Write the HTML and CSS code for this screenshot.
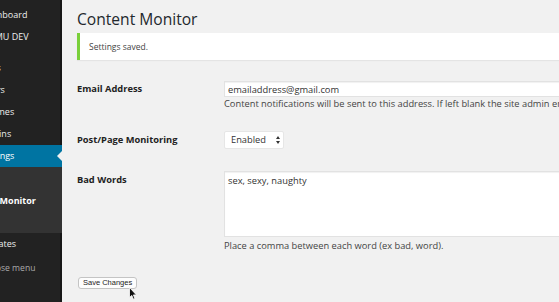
FILE: index.html
```html
<!DOCTYPE html>
<html lang="en">
<head>
<meta charset="utf-8">
<title>Content Monitor</title>
<link rel="stylesheet" href="styles.css">
</head>
<body>
<div class="wrap">
  <nav class="sidebar">
    <ul class="menu">
      <li class="item">Dashboard</li>
      <li class="item">WPMU DEV</li>
      <li class="sep"></li>
      <li class="item">Sites</li>
      <li class="item">Users</li>
      <li class="item">Themes</li>
      <li class="item">Plugins</li>
      <li class="item active">Settings</li>
      <li class="submenu"><span class="sub-item">Content Monitor</span></li>
      <li class="item">Updates</li>
      <li class="item collapse">Collapse menu</li>
    </ul>
  </nav>
  <main class="content">
    <h1 class="title">Content Monitor</h1>
    <div class="notice"><p>Settings saved.</p></div>
    <form class="form">
      <div class="row row-email">
        <label class="label" for="email">Email Address</label>
        <div class="field">
          <input class="text-input" id="email" type="text" value="emailaddress@gmail.com">
          <p class="desc">Content notifications will be sent to this address. If left blank the site admin email will be used.</p>
        </div>
      </div>
      <div class="row row-select">
        <label class="label" for="monitor">Post/Page Monitoring</label>
        <div class="field">
          <div class="select-wrap">
            <select class="select" id="monitor"><option>Enabled</option><option>Disabled</option></select>
            <span class="select-arrows"><svg width="4" height="8" viewBox="0 0 4 8"><path d="M2 0 L4 3 L0 3 Z M2 8 L4 5 L0 5 Z" fill="#333"/></svg></span>
          </div>
        </div>
      </div>
      <div class="row row-words">
        <label class="label" for="words">Bad Words</label>
        <div class="field">
          <textarea class="textarea" id="words">sex, sexy, naughty</textarea>
          <p class="desc">Place a comma between each word (ex bad, word).</p>
        </div>
      </div>
      <div class="actions">
        <button class="button" type="button">Save Changes</button>
        <svg class="cursor" width="8" height="13" viewBox="0 0 8 13"><path d="M0.5 0.5 L0.5 10.5 L2.8 8.4 L4.4 12.2 L5.9 11.5 L4.4 7.9 L7.4 7.9 Z" fill="#111" stroke="#fff" stroke-width="0.8"/></svg>
      </div>
    </form>
  </main>
</div>
</body>
</html>
```
FILE: styles.css
```css
* { box-sizing: border-box; }
html, body { margin: 0; padding: 0; }
body {
  width: 559px;
  height: 302px;
  overflow: hidden;
  background: #f1f1f1;
  font-family: "Open Sans", "Liberation Sans", sans-serif;
  color: #444;
}
.wrap { display: flex; height: 302px; }

/* sidebar */
.sidebar {
  width: 62px;
  flex: none;
  overflow: hidden;
  background: #222;
  box-shadow: inset -2px 0 0 #171717;
  padding-top: 4px;
}
.menu {
  list-style: none;
  margin: 0 0 0 -40px;
  padding: 0;
  width: 102px;
  font-size: 9px;
  color: #eee;
}
.item {
  position: relative;
  height: 22px;
  line-height: 22px;
  padding-left: 21px;
  white-space: nowrap;
}
.sep { height: 9px; }
.item.active { background: #0074a2; color: #fff; }
.item.active::after {
  content: "";
  position: absolute;
  right: 0;
  top: 50%;
  margin-top: -5px;
  border-style: solid;
  border-width: 5px 5px 5px 0;
  border-color: transparent #f1f1f1 transparent transparent;
}
.submenu {
  background: #333;
  padding: 23px 0 21px;
}
.sub-item {
  display: block;
  height: 22px;
  line-height: 22px;
  padding-left: 1px;
  font-weight: 700;
  color: #fff;
  white-space: nowrap;
}
.collapse {
  margin-top: 2px;
  font-size: 8.6px;
  color: #aaa;
  padding-left: 16px;
}

/* content */
.content {
  flex: none;
  width: 560px;
  padding-left: 15px;
}
.title {
  margin: 0;
  padding-top: 9px;
  font-size: 15.6px;
  line-height: 20px;
  font-weight: 400;
  color: #23282d;
}
.notice {
  margin-top: 4px;
  height: 27px;
  background: #fff;
  border-left: 3px solid #7ad03a;
  box-shadow: 0 1px 1px rgba(0,0,0,0.05);
}
.notice p {
  margin: 0;
  padding-left: 9px;
  font-size: 8.5px;
  line-height: 27px;
  color: #444;
}
.form { font-size: 9.3px; }
.row { display: grid; grid-template-columns: 147px 1fr; }
.row-email { margin-top: 21px; }
.row-select { margin-top: 21px; }
.row-words { margin-top: 22px; }
.label {
  font-weight: 700;
  color: #222;
}
.row-email .label { line-height: 15px; }
.row-select .label { line-height: 18px; }
.row-words .label { line-height: 18px; }
.text-input {
  display: block;
  width: 420px;
  height: 16px;
  margin: 0;
  padding: 0 3px;
  border: 1px solid #e2e2e2;
  box-shadow: inset 0 1px 1px rgba(0,0,0,0.06);
  background: #fff;
  font: inherit;
  color: #333;
  line-height: 14px;
}
.desc {
  margin: 1px 0 0;
  line-height: 12px;
  color: #444;
  white-space: nowrap;
}
.select-wrap { position: relative; width: 60px; }
.select {
  -webkit-appearance: none;
  appearance: none;
  display: block;
  width: 60px;
  height: 18px;
  margin: 0;
  padding: 0 0 0 6px;
  border: 1px solid #e6e6e6;
  border-radius: 2px;
  background: #fff;
  font: inherit;
  color: #333;
  line-height: 16px;
}
.select-arrows {
  position: absolute;
  right: 4px;
  top: 5px;
  line-height: 0;
}
.textarea {
  display: block;
  width: 420px;
  height: 66px;
  margin: 0;
  padding: 3px 3px;
  border: 1px solid #e2e2e2;
  box-shadow: inset 0 1px 1px rgba(0,0,0,0.06);
  background: #fff;
  font: inherit;
  color: #333;
  line-height: 12px;
  resize: none;
}
.row-words .desc { margin-top: 3px; }
.actions {
  position: relative;
  margin-top: 25px;
  padding-left: 1px;
}
.button {
  display: block;
  height: 12px;
  margin: 0;
  padding: 0 4px;
  border: 1px solid #c4c4c4;
  border-radius: 3px;
  background: #fdfdfd;
  font-family: "Liberation Sans", Arial, sans-serif;
  font-size: 7.5px;
  line-height: 10px;
  color: #222;
}
.cursor {
  position: absolute;
  left: 52px;
  top: 10px;
}
```
